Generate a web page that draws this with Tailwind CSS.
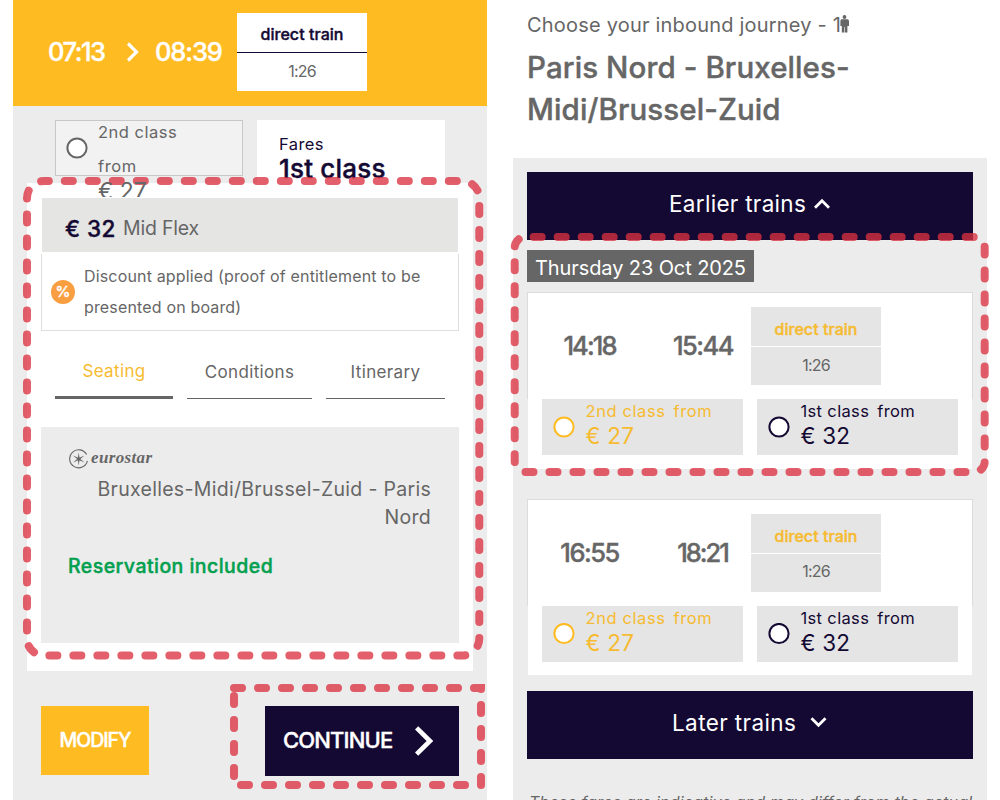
<!DOCTYPE html>
<html lang="en">
<head>
    <meta charset="UTF-8">
    <meta name="viewport" content="width=device-width, initial-scale=1.0">
    <title>Train booking - Choose your journey</title>
    <script src="https://cdn.jsdelivr.net/npm/@tailwindcss/browser@4"></script>
    <style>
        body { font-family: 'Inter', sans-serif; }
        .font-medium { -webkit-text-stroke: 0.4px currentColor; }
    </style>
</head>
<body class="bg-white">

<div class="relative flex h-[800px] w-[1000px] gap-[26px] overflow-hidden px-[13px] leading-none whitespace-nowrap text-[#666]">

    <!-- Selected outbound train -->
    <section class="flex w-[474px] flex-none flex-col bg-[#ececec]">
        <header class="flex h-[106px] flex-none items-start bg-[#febb22] pt-[13px] pl-[35px]">
            <div class="flex h-[77px] w-[189px] items-center text-[25.5px] font-medium text-white">
                <span class="w-[78px] tracking-[-1.5px]">07:13</span>
                <svg class="mr-[15px] h-[20px] w-[14px]" viewBox="0 0 14 20" fill="none" stroke="#fff" stroke-width="3.2"><path d="M2 1.5 10.5 10 2 18.5"/></svg>
                <span class="tracking-[-1.1px]">08:39</span>
            </div>
            <div class="flex h-[78px] w-[130px] flex-col bg-white text-center">
                <div class="h-[40px] border-b border-[#140933] text-[16px] leading-[43px] font-medium tracking-[0.05px] text-[#140933]">direct train</div>
                <div class="text-[16px] leading-[36px] tracking-[-0.8px]">1:26</div>
            </div>
        </header>

        <div class="flex h-[77px] flex-none gap-[14px] pt-[14px] pl-[42px]">
            <div class="flex h-[56px] w-[188px] border-[1.5px] border-[#c8c8c8] bg-[#f2f2f2] pl-[9.5px] text-[16.5px]">
                <svg class="mt-[15.5px] mr-[10.5px] h-[22px] w-[22px]" viewBox="0 0 22 22"><circle cx="11" cy="11" r="9.6" fill="#fff" stroke="#666" stroke-width="2"/></svg>
                <div class="relative z-10 h-[76px] flex-none overflow-hidden">
                    <p class="-mt-[5px] leading-[33.5px] tracking-[0.5px]">2nd class</p>
                    <p class="leading-[33.5px] tracking-[0.6px]">from</p>
                    <p class="text-[23px] leading-[17px]">€ 27</p>
                </div>
            </div>
            <div class="h-[63px] w-[188px] bg-white pt-[16px] pl-[22px] text-[#140933]">
                <p class="text-[16.5px] leading-[17px] tracking-[0.4px]">Fares</p>
                <p class="text-[26px] leading-[31px] font-medium tracking-[0.2px]">1st class</p>
            </div>
        </div>

        <div class="ml-[14px] flex h-[488px] w-[446px] flex-none flex-col bg-white px-[14px] pt-[15px]">
            <div class="mx-px flex h-[54px] flex-none items-center bg-[#e5e5e4] pt-[8px] pl-[23px]">
                <span class="w-[58px] text-[22.5px] font-medium tracking-[0.4px] text-[#140933]">€ 32</span>
                <span class="text-[19.5px] tracking-[-0.2px]">Mid Flex</span>
            </div>
            <div class="mt-[2px] flex h-[77px] flex-none items-center gap-[9px] border border-t-0 border-[#dedede] pb-[1px] pl-[9px]">
                <div class="flex h-[24px] w-[24px] items-center justify-center rounded-full bg-[#f99e41] text-[15px] font-medium text-white">%</div>
                <p class="text-[16px] leading-[30.5px] tracking-[0.16px]">Discount applied (proof of entitlement to be<br>presented on board)</p>
            </div>
            <nav class="mt-[14px] ml-[14px] flex h-[54px] flex-none gap-[14px] text-center text-[17px] tracking-[0.35px]">
                <div class="w-[118px] border-b-[3px] border-[#666] leading-[52px] text-[#f6bb30]">Seating</div>
                <div class="w-[125px] border-b-[1.5px] border-[#666] leading-[54px]">Conditions</div>
                <div class="w-[119px] border-b-[1.5px] border-[#666] leading-[54px]">Itinerary</div>
            </nav>
            <div class="mt-[28px] flex h-[216px] flex-none flex-col bg-[#ececec] px-[28px] pt-[21px]">
                <div class="flex h-[21px] items-center gap-[2px]">
                    <svg class="h-[20px] w-[20px]" viewBox="0 0 20 20" fill="none" stroke="#666">
                        <path d="M17.6 5.6A9 9 0 1 0 18.4 11.8" stroke-width="1.1"/>
                        <path d="M9.7 3.4 10.7 10 9.7 16.6 8.7 10ZM4 6.6 10.4 9.2 15.6 13.4 9.1 10.8ZM15.6 6.6 10.4 10.8 4 13.4 9.1 9.2Z" fill="#666" stroke="none"/>
                    </svg>
                    <span class="pb-[2px] font-['Liberation_Serif'] text-[17px] font-bold tracking-[0.35px] italic">eurostar</span>
                </div>
                <p class="mt-[6px] text-right text-[19.5px] leading-[28px] tracking-[0.3px]">Bruxelles-Midi/Brussel-Zuid - Paris<br>Nord</p>
                <p class="-ml-[1px] mt-[25px] text-[19.5px] leading-[20px] font-medium tracking-[0.45px] text-[#00a04e]">Reservation included</p>
            </div>
        </div>

        <div class="flex justify-between pt-[35px] pr-[28px] pl-[28px]">
            <button class="h-[69px] w-[108px] bg-[#febb22] text-[19.5px] font-medium tracking-[-1px] text-white">MODIFY</button>
            <button class="flex h-[70px] w-[194px] items-center bg-[#140933] pl-[18px] text-[22px] font-medium tracking-[-0.85px] text-white">
                <span class="w-[132px] pb-[2px] text-left">CONTINUE</span>
                <svg class="h-[30px] w-[19px]" viewBox="0 0 19 30" fill="none" stroke="#fff" stroke-width="4.6"><path d="M1.6 1.8 15 15 1.6 28.2"/></svg>
            </button>
        </div>
    </section>

    <!-- Inbound results -->
    <section class="flex w-[474px] flex-none flex-col">
        <header class="h-[158px] flex-none pt-[12px] pl-[14px]">
            <p class="flex h-[26px] items-center text-[20px]">
                <span class="tracking-[0.2px]">Choose your inbound journey - 1</span>
                <svg class="-ml-[1px] mb-[3px] h-[18px] w-[9px]" viewBox="0 0 9 18" fill="#666"><circle cx="4.5" cy="2" r="1.9"/><path d="M1.6 4.3h5.8Q9 4.3 9 6v5H7.4V17.6H4.9V12H4.3V17.6H1.8V11H.4V6Q.4 4.3 1.6 4.3Z"/></svg>
            </p>
            <h1 class="mt-[9px] text-[29.5px] leading-[41.5px] font-medium tracking-[0.1px]">Paris Nord - Bruxelles-<br>Midi/Brussel-Zuid</h1>
        </header>

        <div class="flex flex-1 flex-col bg-[#ececec] px-[14px] pt-[14px]">
            <button class="flex h-[68px] flex-none items-center bg-[#140933] pl-[142px] text-[22.5px] text-white">
                <span class="w-[144px] pb-[3px] text-left tracking-[0.3px]">Earlier trains</span>
                <svg class="mb-[4px] h-[12px] w-[18px]" viewBox="0 0 18 12" fill="none" stroke="#fff" stroke-width="2.8"><path d="M2 9.8 9 2.8 16 9.8"/></svg>
            </button>
            <div class="mt-[10px] h-[32px] w-[227px] flex-none bg-[#666] pl-[8px] text-[20px] leading-[36px] tracking-[-0.1px] text-white">Thursday 23 Oct 2025</div>

            <article class="relative mt-[10px] h-[177px] flex-none border-x border-[#ececec] bg-white px-[14px] pt-[15px]">
                <div class="absolute -inset-x-px top-0 h-[107px] border border-b-0 border-[#dcdcdc]"></div>
                <div class="flex text-center">
                    <div class="flex h-[78px] w-[209px] items-center text-[25.5px] font-medium">
                        <span class="w-[95px] tracking-[-1.9px]">14:18</span>
                        <span class="ml-[18px] w-[96px] tracking-[-1.5px]">15:44</span>
                    </div>
                    <div class="w-[130px] text-[16px]">
                        <div class="h-[39px] bg-[#e5e5e5] leading-[44px] font-medium tracking-[0.05px] text-[#f6bb30]">direct train</div>
                        <div class="mt-px h-[38px] bg-[#e5e5e5] leading-[36px] tracking-[-0.8px]">1:26</div>
                    </div>
                </div>
                <div class="mt-[14px] flex gap-[14px]">
                    <div class="flex h-[56px] w-[201px] items-center gap-[11px] bg-[#e5e5e5] pl-[10.5px] text-[#f6bb30]">
                        <svg class="h-[22px] w-[22px]" viewBox="0 0 22 22"><circle cx="11" cy="11" r="9.6" fill="#fff" stroke="#febb22" stroke-width="2"/></svg>
                        <div class="pb-[7px]">
                            <p class="flex gap-[8px] text-[16.5px] leading-[25px] tracking-[0.6px]"><span>2nd class</span><span>from</span></p>
                            <p class="text-[22.5px] leading-[24px] tracking-[0.2px]">€ 27</p>
                        </div>
                    </div>
                    <div class="flex h-[56px] w-[201px] items-center gap-[11px] bg-[#e5e5e5] pl-[10.5px] text-[#140933]">
                        <svg class="h-[22px] w-[22px]" viewBox="0 0 22 22"><circle cx="11" cy="11" r="9.6" fill="#fff" stroke="#140933" stroke-width="2"/></svg>
                        <div class="pb-[7px]">
                            <p class="flex gap-[8px] text-[16.5px] leading-[25px] tracking-[0.35px]"><span>1st class</span><span>from</span></p>
                            <p class="text-[22.5px] leading-[24px] tracking-[0.2px]">€ 32</p>
                        </div>
                    </div>
                </div>
            </article>

            <article class="relative mt-[30px] h-[176px] flex-none border-x border-[#ececec] bg-white px-[14px] pt-[15px]">
                <div class="absolute -inset-x-px top-0 h-[107px] border border-b-0 border-[#dcdcdc]"></div>
                <div class="flex text-center">
                    <div class="flex h-[78px] w-[209px] items-center text-[25.5px] font-medium">
                        <span class="w-[95px] tracking-[-1.5px]">16:55</span>
                        <span class="ml-[18px] w-[95px] tracking-[-2px]">18:21</span>
                    </div>
                    <div class="w-[130px] text-[16px]">
                        <div class="h-[39px] bg-[#e5e5e5] leading-[44px] font-medium tracking-[0.05px] text-[#f6bb30]">direct train</div>
                        <div class="mt-px h-[38px] bg-[#e5e5e5] leading-[35px] tracking-[-0.8px]">1:26</div>
                    </div>
                </div>
                <div class="mt-[14px] flex gap-[14px]">
                    <div class="flex h-[56px] w-[201px] items-center gap-[11px] bg-[#e5e5e5] pl-[10.5px] text-[#f6bb30]">
                        <svg class="h-[22px] w-[22px]" viewBox="0 0 22 22"><circle cx="11" cy="10.5" r="9.6" fill="#fff" stroke="#febb22" stroke-width="2"/></svg>
                        <div class="pb-[7px]">
                            <p class="flex gap-[8px] text-[16.5px] leading-[25px] tracking-[0.6px]"><span>2nd class</span><span>from</span></p>
                            <p class="text-[22.5px] leading-[24px] tracking-[0.2px]">€ 27</p>
                        </div>
                    </div>
                    <div class="flex h-[56px] w-[201px] items-center gap-[11px] bg-[#e5e5e5] pl-[10.5px] text-[#140933]">
                        <svg class="h-[22px] w-[22px]" viewBox="0 0 22 22"><circle cx="11" cy="10.5" r="9.6" fill="#fff" stroke="#140933" stroke-width="2"/></svg>
                        <div class="pb-[7px]">
                            <p class="flex gap-[8px] text-[16.5px] leading-[25px] tracking-[0.35px]"><span>1st class</span><span>from</span></p>
                            <p class="text-[22.5px] leading-[24px] tracking-[0.2px]">€ 32</p>
                        </div>
                    </div>
                </div>
            </article>

            <button class="mt-[16px] flex h-[68px] flex-none items-center bg-[#140933] pl-[145px] text-[22.5px] text-white">
                <span class="w-[138px] pb-[3px] text-left tracking-[0.4px]">Later trains</span>
                <svg class="mb-[6px] h-[12px] w-[18px]" viewBox="0 0 18 12" fill="none" stroke="#fff" stroke-width="2.8"><path d="M1.5 2.2 8.5 9.2 15.5 2.2"/></svg>
            </button>
            <p class="mt-[33px] pl-[2px] text-[16px] leading-[20px] tracking-[0.2px] italic">These fares are indicative and may differ from the actual</p>
        </div>
    </section>

    <!-- Highlight frames -->
    <svg class="absolute top-0 left-0 h-[800px] w-[1000px]" viewBox="0 0 1000 800" fill="none" stroke="#db3140" stroke-opacity="0.777" stroke-width="8" stroke-linecap="round" stroke-dasharray="8 16">
        <rect x="27" y="181" width="452.3" height="474.5" rx="17" stroke-dashoffset="3.2"/>
        <path d="M234 688H481V785H234V688"/>
        <rect x="514.7" y="237" width="470" height="235" rx="10.5" stroke-dashoffset="-8.5"/>
    </svg>
</div>

</body>
</html>
